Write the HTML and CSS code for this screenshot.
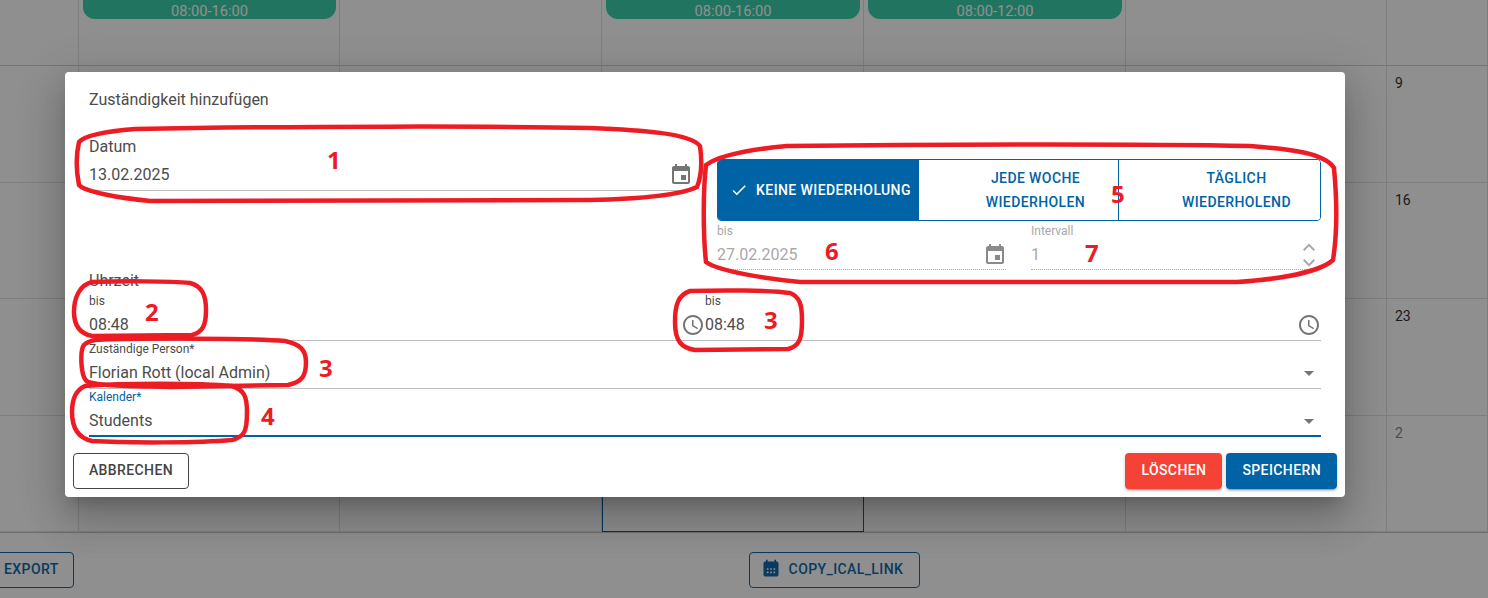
FILE: index.html
```html
<!DOCTYPE html>
<html lang="de">
<head>
    <meta charset="UTF-8">
    <meta name="viewport" content="width=device-width, initial-scale=1">
    <title>Zuständigkeit hinzufügen</title>
    <link rel="stylesheet" href="styles.css">
</head>
<body>
    <div class="calendar">
        <div class="cell first"></div>
        <div class="cell first"><div class="event">08:00-16:00</div></div>
        <div class="cell first"></div>
        <div class="cell first"><div class="event">08:00-16:00</div></div>
        <div class="cell first"><div class="event">08:00-12:00</div></div>
        <div class="cell first"></div>
        <div class="cell first"></div>

        <div class="cell"></div><div class="cell"></div><div class="cell"></div><div class="cell"></div><div class="cell"></div><div class="cell"></div>
        <div class="cell">9</div>
        <div class="cell"></div><div class="cell"></div><div class="cell"></div><div class="cell"></div><div class="cell"></div><div class="cell"></div>
        <div class="cell">16</div>
        <div class="cell"></div><div class="cell"></div><div class="cell"></div><div class="cell"></div><div class="cell"></div><div class="cell"></div>
        <div class="cell">23</div>
        <div class="cell"></div><div class="cell"></div><div class="cell"></div>
        <div class="cell selected"></div>
        <div class="cell"></div><div class="cell"></div>
        <div class="cell other-month">2</div>
    </div>

    <div class="toolbar">
        <button class="outline-btn export-btn">EXPORT</button>
        <button class="outline-btn ical-btn">
            <svg class="icon-20" viewBox="0 0 24 24"><path fill-rule="evenodd" d="M19 3h-1V1h-2v2H8V1H6v2H5a2 2 0 0 0-2 2v14a2 2 0 0 0 2 2h14a2 2 0 0 0 2-2V5a2 2 0 0 0-2-2zM7 11h2v2H7zm4 0h2v2h-2zm4 0h2v2h-2zM7 15h2v2H7zm4 0h2v2h-2zm4 0h2v2h-2z"/></svg>
            COPY_ICAL_LINK
        </button>
    </div>

    <div class="backdrop"></div>

    <div class="modal">
        <div class="modal-title">Zuständigkeit hinzufügen</div>
        <div class="modal-body">
            <div class="top-row">
                <div class="date-field">
                    <div class="big-label">Datum</div>
                    <div class="value-row">
                        <span class="value">13.02.2025</span>
                        <svg class="icon" viewBox="0 0 24 24"><path d="M17 12h-5v5h5v-5zM16 1v2H8V1H6v2H5c-1.11 0-1.99.9-1.99 2L3 19c0 1.1.89 2 2 2h14c1.1 0 2-.9 2-2V5c0-1.1-.9-2-2-2h-1V1h-2zm3 18H5V8h14v11z"/></svg>
                    </div>
                </div>
                <div class="repeat">
                    <div class="toggle-group">
                        <button class="toggle active">
                            <svg class="check" viewBox="0 0 24 24"><path d="M9 16.17L4.83 12l-1.42 1.41L9 19 21 7l-1.41-1.41z"/></svg>
                            KEINE WIEDERHOLUNG
                        </button>
                        <button class="toggle second">JEDE WOCHE WIEDERHOLEN</button>
                        <button class="toggle">TÄGLICH WIEDERHOLEND</button>
                    </div>
                    <div class="repeat-fields">
                        <div class="disabled-field">
                            <div class="small-label">bis</div>
                            <div class="value-row">
                                <span class="value">27.02.2025</span>
                                <svg class="icon" viewBox="0 0 24 24"><path d="M17 12h-5v5h5v-5zM16 1v2H8V1H6v2H5c-1.11 0-1.99.9-1.99 2L3 19c0 1.1.89 2 2 2h14c1.1 0 2-.9 2-2V5c0-1.1-.9-2-2-2h-1V1h-2zm3 18H5V8h14v11z"/></svg>
                            </div>
                        </div>
                        <div class="disabled-field">
                            <div class="small-label">Intervall</div>
                            <div class="value-row">
                                <span class="value">1</span>
                                <div class="spinner">
                                    <svg viewBox="0 4.5 24 15"><path d="M7.41 15.41L12 10.83l4.59 4.58L18 14l-6-6-6 6z"/></svg>
                                    <svg viewBox="0 4.5 24 15"><path d="M7.41 8.59L12 13.17l4.59-4.58L18 10l-6 6-6-6z"/></svg>
                                </div>
                            </div>
                        </div>
                    </div>
                </div>
            </div>

            <div class="big-label">Uhrzeit</div>
            <div class="time-row">
                <div class="field">
                    <div class="small-label">bis</div>
                    <div class="value-row">
                        <span class="value">08:48</span>
                    </div>
                </div>
                <div class="field">
                    <div class="small-label">bis</div>
                    <div class="value-row">
                        <svg class="icon prefix" viewBox="0 0 24 24"><path d="M11.99 2C6.47 2 2 6.48 2 12s4.47 10 9.99 10C17.52 22 22 17.52 22 12S17.52 2 11.99 2zM12 20c-4.42 0-8-3.58-8-8s3.58-8 8-8 8 3.58 8 8-3.58 8-8 8zm.5-13H11v6l5.25 3.15.75-1.23-4.5-2.67z"/></svg>
                        <span class="value">08:48</span>
                        <svg class="icon" viewBox="0 0 24 24"><path d="M11.99 2C6.47 2 2 6.48 2 12s4.47 10 9.99 10C17.52 22 22 17.52 22 12S17.52 2 11.99 2zM12 20c-4.42 0-8-3.58-8-8s3.58-8 8-8 8 3.58 8 8-3.58 8-8 8zm.5-13H11v6l5.25 3.15.75-1.23-4.5-2.67z"/></svg>
                    </div>
                </div>
            </div>

            <div class="field">
                <div class="small-label">Zuständige Person*</div>
                <div class="value-row">
                    <span class="value">Florian Rott (local Admin)</span>
                    <svg class="icon" viewBox="0 0 24 24"><path d="M7 10l5 5 5-5z"/></svg>
                </div>
            </div>
            <div class="field focused">
                <div class="small-label">Kalender*</div>
                <div class="value-row">
                    <span class="value">Students</span>
                    <svg class="icon" viewBox="0 0 24 24"><path d="M7 10l5 5 5-5z"/></svg>
                </div>
            </div>
        </div>
        <div class="modal-footer">
            <button class="cancel-btn">ABBRECHEN</button>
            <div class="footer-right">
                <button class="raised-btn delete">LÖSCHEN</button>
                <button class="raised-btn save">SPEICHERN</button>
            </div>
        </div>
    </div>

    <!-- rote Markierungen -->
    <svg class="marks" viewBox="0 0 1488 598">
        <path d="M135 129C300 126 500 126 590 128C640 130 690 133 700 146C702 160 702 175 697 187C680 195 640 199 590 200L150 201C120 198 85 192 79 185C76 170 76 155 79 142C85 135 110 131 135 129Z"/>
        <path d="M787 146C950 144 1150 144 1250 146C1290 149 1325 153 1334 168C1337 200 1337 235 1333 260C1320 272 1280 279 1237 282L800 282C770 279 720 272 706 262C703 235 703 190 706 165C720 155 755 149 787 146Z"/>
        <path d="M92 282C120 281 170 281 190 283C202 286 206 295 206 310C206 325 203 332 192 335L92 336C82 334 74 328 74 312C74 297 80 285 92 282Z"/>
        <path d="M690 291C720 290 770 290 790 293C800 297 802 305 802 320C802 338 800 346 788 349L695 350C682 348 675 342 675 322C675 305 678 295 690 291Z"/>
        <path d="M95 340C140 338 250 338 285 341C300 344 306 350 306 362C306 376 302 382 288 385L170 387C130 386 100 386 88 382C80 378 80 350 84 345C87 342 90 341 95 340Z"/>
        <path d="M85 386C120 383 200 383 232 386C244 390 247 396 247 412C247 430 245 437 232 440C200 443 125 443 92 441C78 438 72 428 72 412C72 398 76 390 85 386Z"/>
    </svg>
    <span class="mark-no no-1">1</span>
    <span class="mark-no no-2">2</span>
    <span class="mark-no no-3a">3</span>
    <span class="mark-no no-3b">3</span>
    <span class="mark-no no-4">4</span>
    <span class="mark-no no-5">5</span>
    <span class="mark-no no-6">6</span>
    <span class="mark-no no-7">7</span>
</body>
</html>
```

FILE: styles.css
```css
* { box-sizing: border-box; }
body {
    margin: 0;
    width: 1488px;
    height: 598px;
    overflow: hidden;
    position: relative;
    background: #fff;
    font-family: Roboto, sans-serif;
    color: #4c4c4c;
}
button {
    font-family: Roboto, sans-serif;
    cursor: pointer;
}

/* Kalender im Hintergrund */
.calendar {
    display: grid;
    grid-template-columns: 79px 261px 262px 262px 262px 261px 101px;
    grid-template-rows: 66px repeat(4, 116.6px);
}
.cell {
    border-right: 1px solid #e0e0e0;
    border-bottom: 1px solid #e0e0e0;
    padding: 8px;
    font-size: 14px;
    line-height: 18px;
    color: #333;
}
.cell.first {
    padding: 0;
    border-bottom-color: #d0d0d0;
}
.cell.selected { border: 1px solid #0063a6; }
.cell.other-month { color: #888; }
.event {
    height: 19px;
    margin: 0 3px 0 4px;
    background: #3bd1ab;
    border-radius: 0 0 12px 12px;
    color: #fff;
    font-size: 14.7px;
    line-height: 22px;
    text-align: center;
}
.toolbar {
    display: flex;
    align-items: flex-start;
    padding-top: 19px;
    border-top: 1px solid #c8c8c8;
}
.outline-btn {
    display: flex;
    align-items: center;
    gap: 8px;
    height: 36px;
    padding: 0 16px 2px;
    background: transparent;
    border: 1px solid #0f6aaa;
    border-radius: 4px;
    color: #0f6aaa;
    font-size: 14px;
    font-weight: 500;
    letter-spacing: 0.4px;
}
.outline-btn svg { fill: #0f6aaa; }
.export-btn {
    margin-left: -40px;
    padding: 0 14px 2px 43px;
}
.ical-btn {
    margin-left: 675px;
    padding: 0 16px 2px 11px;
}
.icon-20 { width: 20px; height: 20px; }
.backdrop {
    position: absolute;
    inset: 0;
    background: rgba(0, 0, 0, 0.44);
}

/* Dialog */
.modal {
    position: absolute;
    left: 65px;
    top: 72px;
    width: 1280px;
    height: 425px;
    background: #fff;
    border-radius: 4px;
    box-shadow: 0 11px 15px -7px rgba(0,0,0,0.2), 0 24px 38px 3px rgba(0,0,0,0.14), 0 9px 46px 8px rgba(0,0,0,0.12);
}
.modal-title {
    padding: 16px 24px 0;
    height: 38px;
    font-size: 16px;
    line-height: 24px;
}
.modal-body { padding: 0 24px; }
.top-row {
    display: grid;
    grid-template-columns: 603px 604px;
    gap: 25px;
    height: 161px;
}
.big-label {
    font-size: 16px;
    line-height: 20px;
}
.date-field {
    padding-top: 27px;
    height: 81px;
    border-bottom: 1px solid #bdbdbd;
}
.date-field .value-row { margin-top: 6px; }
.value-row {
    display: flex;
    align-items: center;
    height: 24px;
}
.value {
    flex: 1;
    font-size: 16px;
    line-height: 24px;
}
.icon {
    width: 24px;
    height: 24px;
    fill: #757575;
    flex: none;
}
.date-field .icon { margin-right: -1px; }
.icon.prefix { margin-left: -24px; }
.small-label {
    font-size: 12px;
    line-height: 14px;
}

/* Wiederholung */
.repeat { padding-top: 49px; }
.toggle-group {
    display: flex;
    height: 62px;
    border: 1px solid #0063a6;
    border-radius: 4px;
    overflow: hidden;
}
.toggle {
    display: flex;
    align-items: center;
    justify-content: center;
    padding: 0 16px 1px 50px;
    border: 0;
    background: #fff;
    color: #0063a6;
    font-size: 14px;
    font-weight: 500;
    line-height: 24px;
    letter-spacing: 0.4px;
    flex: 1 1 0;
}
.toggle + .toggle { border-left: 1px solid #0063a6; }
.toggle.second {
    flex: none;
    width: 200px;
}
.toggle.active {
    flex: none;
    width: 200px;
    padding: 0 0 1px 5px;
    gap: 8px;
    background: #0063a6;
    color: #fff;
    white-space: nowrap;
}
.check {
    width: 18px;
    height: 18px;
    fill: #fff;
    flex: none;
}
.repeat-fields {
    display: grid;
    grid-template-columns: 289px 290px;
    gap: 25px;
    padding-top: 3px;
}
.disabled-field {
    height: 46px;
    border-bottom: 1px dotted #aaa;
    color: #a8a8a8;
}
.disabled-field .value-row { margin-top: 5px; }
.disabled-field .icon { fill: #8a8a8a; margin-right: -1px; }
.spinner {
    display: flex;
    flex-direction: column;
    align-items: center;
    width: 24px;
}
.spinner svg {
    width: 24px;
    height: 15px;
    fill: #a8a8a8;
}

/* Felder */
.time-row {
    display: grid;
    grid-template-columns: 1fr 1fr;
    margin-top: 2px;
}
.field {
    height: 48px;
    padding-top: 1px;
    border-bottom: 1px solid #bdbdbd;
}
.field .value-row { margin-top: 5px; }
.field.focused { border-bottom: 2px solid #0063a6; }
.field.focused .small-label { color: #0063a6; }

.modal-footer {
    display: flex;
    justify-content: space-between;
    padding: 16px 8px 8px;
}
.footer-right {
    display: flex;
    gap: 4px;
}
.cancel-btn {
    height: 36px;
    width: 116px;
    padding: 0 0 2px;
    background: #fff;
    border: 1px solid #444;
    border-radius: 4px;
    color: #444;
    font-size: 14px;
    font-weight: 500;
    letter-spacing: 0.4px;
}
.raised-btn {
    height: 36px;
    padding: 0 16px 2px;
    border: 0;
    border-radius: 4px;
    color: #fff;
    font-size: 14px;
    font-weight: 500;
    letter-spacing: 0.4px;
    box-shadow: 0 3px 1px -2px rgba(0,0,0,0.2), 0 2px 2px 0 rgba(0,0,0,0.14), 0 1px 5px 0 rgba(0,0,0,0.12);
}
.raised-btn.delete { background: #f44336; }
.raised-btn.save { background: #0063a6; }

/* rote Markierungen über dem Screenshot */
.marks {
    position: absolute;
    left: 0;
    top: 0;
    width: 1488px;
    height: 598px;
    fill: none;
    stroke: #ed1c24;
    stroke-width: 4.5;
    pointer-events: none;
}
.mark-no {
    position: absolute;
    font-family: "Open Sans", sans-serif;
    font-size: 24px;
    font-weight: 700;
    line-height: 28px;
    color: #ed1c24;
}
.no-1 { left: 327px; top: 146px; }
.no-2 { left: 145px; top: 298px; }
.no-3a { left: 764px; top: 306px; }
.no-3b { left: 319px; top: 354px; }
.no-4 { left: 261px; top: 402px; }
.no-5 { left: 1111px; top: 180px; }
.no-6 { left: 825px; top: 237px; }
.no-7 { left: 1085px; top: 239px; }
```
